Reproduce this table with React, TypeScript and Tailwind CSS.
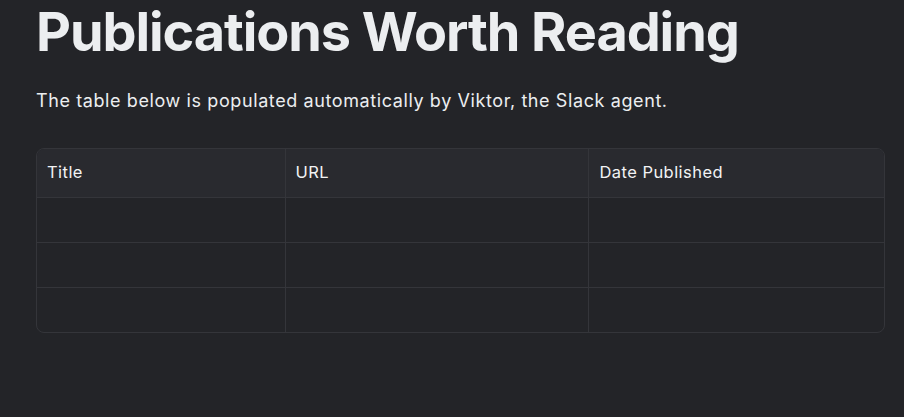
export default function App() {
  const rows = [0, 1, 2];
  return (
    <div className="min-h-[417px] w-full bg-[#232428] font-[Inter,sans-serif] text-[#eceef0]">
      <div className="pl-[36px] pr-[19px] pt-[2px]">
        <h1 className="text-[54px] leading-[60px] font-bold tracking-[-0.02em]">Publications Worth Reading</h1>
        <p className="mt-[25px] text-[18px] leading-[28px] tracking-[0.6px]">The table below is populated automatically by Viktor, the Slack agent.</p>
        <div className="mt-[33px] overflow-hidden rounded-[8px] border border-[#34353a]">
          <table className="w-full border-collapse text-[16.5px] tracking-[0.45px]">
            <thead>
              <tr className="bg-[#292a2f] text-[#f2f3f5]">
                <th className="h-[48px] w-[248px] border-r border-b border-[#34353a] px-[10px] text-left font-normal">Title</th>
                <th className="h-[48px] w-[303px] border-r border-b border-[#34353a] px-[10px] text-left font-normal">URL</th>
                <th className="h-[48px] border-b border-[#34353a] px-[11px] text-left font-normal">Date Published</th>
              </tr>
            </thead>
            <tbody>
              {rows.map((r) => (
                <tr key={r}>
                  <td className={r < 2 ? "h-[45px] border-r border-b border-[#34353a]" : "h-[45px] border-r border-[#34353a]"}></td>
                  <td className={r < 2 ? "h-[45px] border-r border-b border-[#34353a]" : "h-[45px] border-r border-[#34353a]"}></td>
                  <td className={r < 2 ? "h-[45px] border-b border-[#34353a]" : "h-[45px]"}></td>
                </tr>
              ))}
            </tbody>
          </table>
        </div>
      </div>
    </div>
  );
}
